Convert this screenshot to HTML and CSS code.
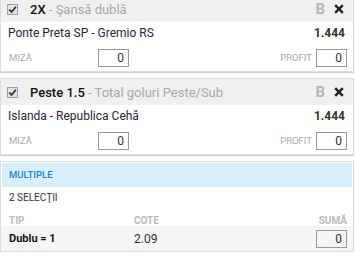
FILE: index.html
```html
<!DOCTYPE html>
<html>
<head>
<meta charset="utf-8">
<link rel="stylesheet" href="styles.css">
</head>
<body>
<div class="card first">
  <div class="head">
    <span class="chk"><svg width="11" height="11" viewBox="0 0 11 11"><rect x="0.5" y="0.5" width="10" height="10" fill="#e4e4e4" stroke="#a0a0a0"/><path d="M2.2 5.6 L4.6 8 L8.9 2.8" fill="none" stroke="#333" stroke-width="1.8"/></svg></span>
    <span class="sel">2X</span><span class="mkt">&nbsp;- Şansă dublă</span>
    <span class="spacer"></span>
    <span class="b">B</span>
    <span class="x"><svg width="10" height="10" viewBox="0 0 10 10"><path d="M1.2 1.2 L8.8 8.8 M8.8 1.2 L1.2 8.8" stroke="#222" stroke-width="2.4"/></svg></span>
  </div>
  <div class="match"><span>Ponte Preta SP - Gremio RS</span><span class="odd">1.444</span></div>
  <div class="stake">
    <span class="lbl">MIZĂ</span><span class="inp">0</span>
    <span class="spacer"></span>
    <span class="lbl">PROFIT</span><span class="inp">0</span>
  </div>
</div>
<div class="card">
  <div class="head">
    <span class="chk"><svg width="11" height="11" viewBox="0 0 11 11"><rect x="0.5" y="0.5" width="10" height="10" fill="#e4e4e4" stroke="#a0a0a0"/><path d="M2.2 5.6 L4.6 8 L8.9 2.8" fill="none" stroke="#333" stroke-width="1.8"/></svg></span>
    <span class="sel">Peste 1.5</span><span class="mkt">&nbsp;- Total goluri Peste/Sub</span>
    <span class="spacer"></span>
    <span class="b">B</span>
    <span class="x"><svg width="10" height="10" viewBox="0 0 10 10"><path d="M1.2 1.2 L8.8 8.8 M8.8 1.2 L1.2 8.8" stroke="#222" stroke-width="2.4"/></svg></span>
  </div>
  <div class="match"><span>Islanda - Republica Cehă</span><span class="odd">1.444</span></div>
  <div class="stake">
    <span class="lbl">MIZĂ</span><span class="inp">0</span>
    <span class="spacer"></span>
    <span class="lbl">PROFIT</span><span class="inp">0</span>
  </div>
</div>
<div class="card multi">
  <div class="mhead">MULTIPLE</div>
  <div class="count">2 SELECŢII</div>
  <div class="grid ghead"><span>TIP</span><span>COTE</span><span class="r">SUMĂ</span></div>
  <div class="grid grow"><span class="bold">Dublu = 1</span><span>2.09</span><span class="inp">0</span></div>
</div>
</body>
</html>
```
FILE: styles.css
```css
body {
  margin: 0;
  font-family: Roboto, "Liberation Sans", Arial, sans-serif;
  color: #333;
  background: #fff;
}
.card {
  border: 1px solid #ddd;
  box-shadow: 0 1px 1px rgba(0,0,0,0.18);
  margin: 0 1px 6px 0;
  background: #fff;
}
.card.first { margin-top: -5px; }
.head {
  display: flex;
  align-items: center;
  height: 26px;
  background: #f0f0f0;
  padding: 0 9px 0 6px;
  font-size: 13px;
}
.chk { display: flex; width: 11px; height: 11px; margin-right: 12px; }
.sel { font-weight: 500; color: #111; }
.mkt { color: #aaa; }
.spacer { flex: 1; }
.b { color: #b5b5b5; font-weight: bold; font-size: 15px; margin-right: 9px; }
.x { display: flex; }
.match {
  display: flex;
  justify-content: space-between;
  align-items: center;
  height: 22px;
  padding: 0 8px 0 7px;
  font-size: 12px;
  color: #2b2438;
}
.odd { font-weight: bold; color: #333; }
.stake {
  display: flex;
  align-items: center;
  height: 27px;
  padding: 0 6px 0 8px;
}
.lbl { font-size: 9.5px; color: #aaa; }
.stake .lbl:first-child { width: 85px; }
.stake .lbl + .inp { margin-left: 4px; }
.inp {
  display: inline-block;
  box-sizing: border-box;
  width: 31px;
  height: 18px;
  border: 1px solid #999;
  font-size: 12px;
  line-height: 16px;
  text-align: right;
  padding-right: 4px;
  color: #333;
}
.multi { margin-bottom: 0; }
.mhead {
  height: 24px;
  line-height: 24px;
  background: #d8effc;
  color: #1d84c6;
  font-size: 9.5px;
  font-weight: 500;
  padding-left: 7px;
  margin: 1px 1px 0 1px;
}
.count { font-size: 10px; height: 22px; line-height: 22px; padding: 0 8px; }
.grid {
  display: grid;
  grid-template-columns: 125px 1fr auto;
  align-items: center;
  padding: 0 6px 0 8px;
}
.ghead { height: 17px; font-size: 10px; font-weight: bold; color: #bbb; align-items: end; box-sizing: border-box; }
.r { text-align: right; }
.grow { height: 25px; background: #f5f5f5; font-size: 12px; }
.bold { font-weight: bold; color: #111; font-size: 11px; }
```
